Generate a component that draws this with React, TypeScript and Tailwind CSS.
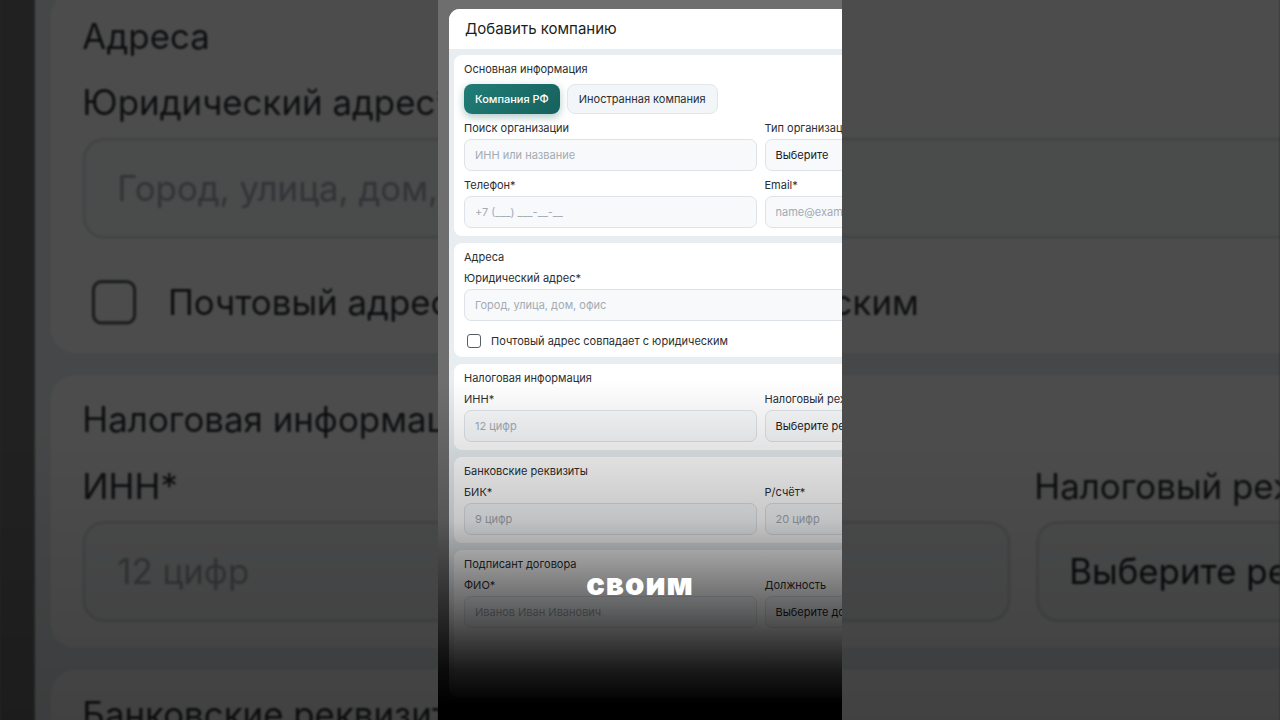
import React from 'react'

const font = { fontFamily: 'Inter, "Noto Sans", sans-serif' }

type FieldProps = { label: string; value: string; filled?: boolean }

const Field: React.FC<FieldProps> = ({ label, value, filled }) => (
    <div className="flex flex-col gap-[4px] min-w-0">
        <span className="text-[11px] leading-[14px] text-[#2a2e33] whitespace-nowrap">{label}</span>
        <div className="h-[32px] rounded-[7px] border border-[#dde3e8] bg-[#f7f9fb] px-[10px] flex items-center">
            <span className={filled ? 'text-[11px] text-[#1c2024] whitespace-nowrap' : 'text-[11px] text-[#a3abb3] whitespace-nowrap'}>
                {value}
            </span>
        </div>
    </div>
)

const Section: React.FC<{ title: string; children: React.ReactNode }> = ({ title, children }) => (
    <div className="bg-white rounded-[8px] px-[10px] pt-[7px] pb-[8px] flex flex-col">
        <span className="text-[11px] leading-[14px] text-[#2a2e33] mb-[7px]">{title}</span>
        {children}
    </div>
)

const Modal: React.FC = () => (
    <div className="w-[623px] h-[689px] bg-white rounded-[11px] overflow-hidden flex flex-col shrink-0">
        <div className="h-[40px] shrink-0 flex items-center px-[16px] bg-white">
            <span className="text-[15px] text-[#1b1f23]">Добавить компанию</span>
        </div>
        <div className="flex-1 bg-[#e7edf0] px-[5px] pt-[6px] flex flex-col gap-[7px]">
            <Section title="Основная информация">
                <div className="flex gap-[7px] mt-[1px] mb-[7px]">
                    <div className="h-[30px] px-[11px] rounded-[8px] bg-[linear-gradient(135deg,#217d77,#16615d)] shadow-[0_3px_8px_rgba(22,97,93,0.35)] flex items-center">
                        <span className="text-[11px] font-medium text-white">Компания РФ</span>
                    </div>
                    <div className="h-[30px] px-[11px] rounded-[8px] bg-[#f3f6f8] border border-[#e0e6ea] flex items-center">
                        <span className="text-[11px] text-[#2a2e33]">Иностранная компания</span>
                    </div>
                </div>
                <div className="grid grid-cols-2 gap-x-[8px] gap-y-[7px]">
                    <Field label="Поиск организации" value="ИНН или название" />
                    <Field label="Тип организации" value="Выберите" filled />
                    <Field label="Телефон*" value="+7 (___) ___-__-__" />
                    <Field label="Email*" value="name@example.com" />
                </div>
            </Section>
            <Section title="Адреса">
                <Field label="Юридический адрес*" value="Город, улица, дом, офис" />
                <div className="flex items-center gap-[10px] mt-[13px] mb-[1px] pl-[3px]">
                    <div className="w-[14px] h-[14px] rounded-[3px] border border-[#5a5f64] bg-white" />
                    <span className="text-[11px] leading-[14px] text-[#2a2e33]">Почтовый адрес совпадает с юридическим</span>
                </div>
            </Section>
            <Section title="Налоговая информация">
                <div className="grid grid-cols-2 gap-x-[8px]">
                    <Field label="ИНН*" value="12 цифр" />
                    <Field label="Налоговый режим" value="Выберите режим" filled />
                </div>
            </Section>
            <Section title="Банковские реквизиты">
                <div className="grid grid-cols-2 gap-x-[8px]">
                    <Field label="БИК*" value="9 цифр" />
                    <Field label="Р/счёт*" value="20 цифр" />
                </div>
            </Section>
            <Section title="Подписант договора">
                <div className="grid grid-cols-2 gap-x-[8px]">
                    <Field label="ФИО*" value="Иванов Иван Иванович" />
                    <Field label="Должность" value="Выберите должность" filled />
                </div>
                <div className="h-[60px]" />
            </Section>
        </div>
    </div>
)

const Frame: React.FC = () => (
    <div className="relative w-[404px] h-[720px] overflow-hidden bg-[#6e6e6e] pl-[11px] pt-[9px]" style={font}>
        <Modal />
        <div className="absolute inset-0 bg-[linear-gradient(to_bottom,transparent_0px,transparent_380px,rgba(0,0,0,0.08)_430px,rgba(0,0,0,0.22)_520px,rgba(0,0,0,0.62)_610px,rgba(0,0,0,0.9)_670px,rgba(0,0,0,1)_705px)]" />
    </div>
)

export default function App() {
    return (
        <div className="relative w-[1280px] h-[720px] overflow-hidden bg-[#262626]">
            <div className="absolute inset-0 brightness-[0.3] blur-[1px]">
                <div className="absolute left-0 top-[-778px] origin-top-left scale-[3.168]">
                    <Frame />
                </div>
            </div>
            <div className="relative flex justify-center">
                <Frame />
                <div className="absolute left-0 right-0 top-[566px] flex justify-center">
                    <span className="text-[31px] leading-[36px] font-black tracking-[1px] text-white" style={font}>
                        своим
                    </span>
                </div>
            </div>
        </div>
    )
}
